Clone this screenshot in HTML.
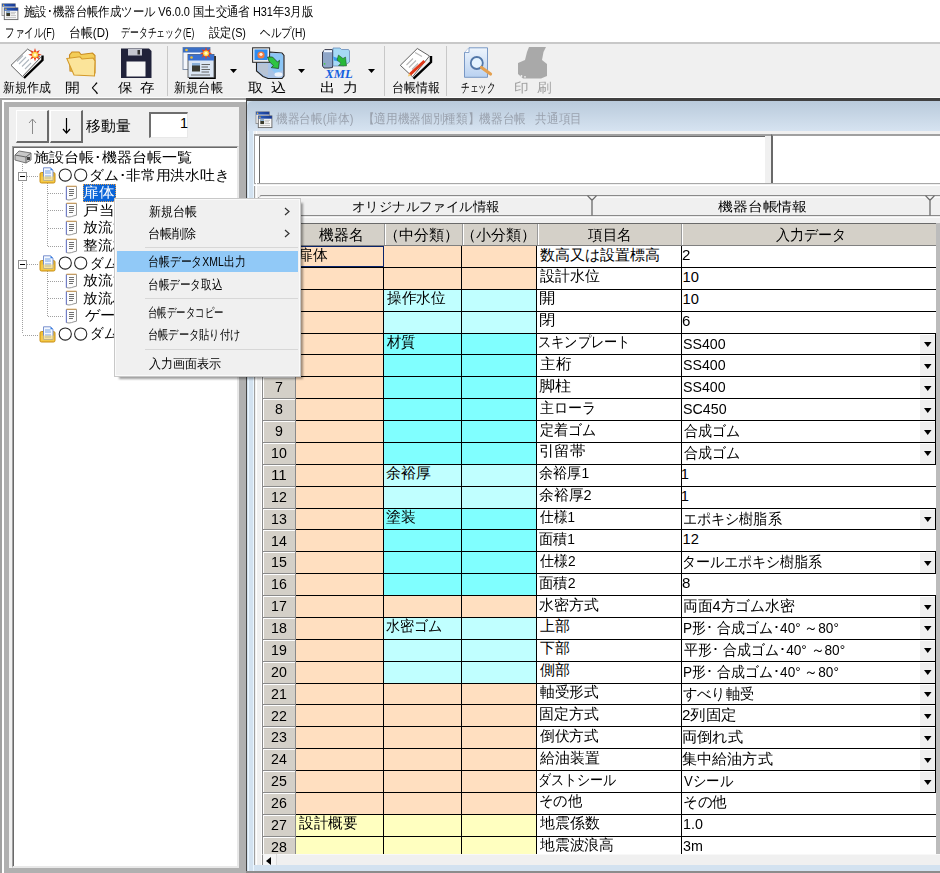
<!DOCTYPE html><html lang="ja"><head><meta charset="utf-8"><style>
*{box-sizing:border-box;margin:0;padding:0}
html,body{width:940px;height:873px;overflow:hidden}
body{position:relative;background:#f0f0f0;font-family:"Liberation Sans",sans-serif;color:#000;font-size:12px;line-height:1}
.a{position:absolute}
.t{position:absolute;white-space:nowrap;line-height:20px;transform-origin:0 0}
</style></head><body><div class="a" style="left:0px;top:0px;width:940px;height:42px;background:#fff"></div>
<svg class="a" style="left:0px;top:1px" width="19" height="20" viewBox="0 0 19 20">
<defs><linearGradient id="tb0" x1="0" x2="1"><stop offset="0" stop-color="#2a5cc0"/><stop offset="1" stop-color="#1a3a90"/></linearGradient></defs>
<rect x="2" y="2.8" width="13.3" height="11.8" fill="#f8f8f8" stroke="#888" stroke-width="0.8"/>
<rect x="2" y="2.8" width="13.3" height="2.8" fill="url(#tb0)"/><circle cx="3.6" cy="4.2" r="0.8" fill="#f8c030"/>
<rect x="5" y="14.6" width="12.9" height="4" fill="#999" opacity="0.5"/>
<rect x="4.3" y="6.9" width="13.6" height="11.7" fill="#fafafa" stroke="#666" stroke-width="0.9"/>
<rect x="4.3" y="6.9" width="13.6" height="2.8" fill="url(#tb0)"/><circle cx="5.9" cy="8.3" r="0.8" fill="#f8c030"/>
<rect x="6.3" y="10.5" width="3.8" height="4.6" fill="#3a3a2a"/><rect x="6.3" y="10.5" width="3.8" height="1.4" fill="#9ac0e8"/>
<path d="M11 11.3H16M11 12.8H15M11 14.6H16M6 16.6H16" stroke="#aaa" stroke-width="0.7"/>
</svg>
<div class="t" style="left:23.90px;top:1.60px;font-size:12.5px;transform:scaleX(0.8751);">施設･機器台帳作成ツール V6.0.0 国土交通省 H31年3月版</div>
<div class="t" style="left:5.33px;top:22.90px;font-size:12.5px;transform:scaleX(0.7338);">ファイル(F)</div>
<div class="t" style="left:68.88px;top:22.90px;font-size:12.5px;transform:scaleX(0.9167);">台帳(D)</div>
<div class="t" style="left:121.22px;top:22.90px;font-size:12.5px;transform:scaleX(0.6802);">データチェック(E)</div>
<div class="t" style="left:209.40px;top:22.90px;font-size:12.5px;transform:scaleX(0.8667);">設定(S)</div>
<div class="t" style="left:260.40px;top:22.90px;font-size:12.5px;transform:scaleX(0.8089);">ヘルプ(H)</div>
<div class="a" style="left:0px;top:42px;width:940px;height:2px;background:#c8c8c8"></div>
<div class="a" style="left:0px;top:97px;width:940px;height:1px;background:#fcfcfc"></div>
<div class="t" style="left:3.00px;top:78.30px;font-size:12.5px;transform:scaleX(0.9135);">新規作成</div>
<div class="t" style="left:65.36px;top:78.30px;font-size:12.5px;transform:scaleX(1.1393);">開&nbsp;&nbsp;く</div>
<div class="t" style="left:118.40px;top:78.30px;font-size:12.5px;transform:scaleX(1.1125);">保&nbsp;&nbsp;存</div>
<div class="t" style="left:174.00px;top:78.30px;font-size:12.5px;transform:scaleX(0.9412);">新規台帳</div>
<div class="t" style="left:248.32px;top:78.30px;font-size:12.5px;transform:scaleX(1.1774);">取&nbsp;&nbsp;込</div>
<div class="t" style="left:319.84px;top:78.30px;font-size:12.5px;transform:scaleX(1.1567);">出&nbsp;&nbsp;力</div>
<div class="t" style="left:392.08px;top:78.30px;font-size:12.5px;transform:scaleX(0.9200);">台帳情報</div>
<div class="t" style="left:461.33px;top:78.30px;font-size:12.5px;transform:scaleX(0.6653);">チェック</div>
<div class="t" style="left:513.87px;top:78.30px;font-size:12.5px;transform:scaleX(1.1290);color:#a0a0a0">印&nbsp;&nbsp;刷</div>
<div class="a" style="left:167px;top:46px;width:1px;height:50px;background:#c8c8c8"></div>
<div class="a" style="left:384px;top:46px;width:1px;height:50px;background:#c8c8c8"></div>
<div class="a" style="left:446px;top:46px;width:1px;height:50px;background:#c8c8c8"></div>
<svg class="a" style="left:230px;top:69px" width="8" height="5"><path d="M0 0H7L3.5 4Z" fill="#000"/></svg>
<svg class="a" style="left:298px;top:69px" width="8" height="5"><path d="M0 0H7L3.5 4Z" fill="#000"/></svg>
<svg class="a" style="left:368px;top:69px" width="8" height="5"><path d="M0 0H7L3.5 4Z" fill="#000"/></svg>
<svg class="a" style="left:8px;top:46px" width="38" height="34" viewBox="8 46 38 34"><path d="M24 78 L42.5 60 L42.5 55.5" stroke="#000" stroke-width="2.4" fill="none"/><path d="M11 65.3 L27.6 49.1 L40.5 57.5 L22.4 76.6 Z" fill="#fff" stroke="#505050" stroke-width="0.9"/><path d="M19 64 L26 57 M22 66.5 L29 59.5 M25 69 L31 63 M17 61.5 L23 55.5" stroke="#b0b8c0" stroke-width="1.1"/><polygon points="35.00,48.00 36.22,51.84 39.81,49.99 37.96,53.58 41.80,54.80 37.96,56.02 39.81,59.61 36.22,57.76 35.00,61.60 33.78,57.76 30.19,59.61 32.04,56.02 28.20,54.80 32.04,53.58 30.19,49.99 33.78,51.84" fill="#e8401a"/><circle cx="35" cy="54.8" r="3.04" fill="#ffd84a"/><circle cx="35" cy="54.8" r="1.60" fill="#fff8d0"/></svg>
<svg class="a" style="left:64px;top:48px" width="34" height="30" viewBox="64 48 34 30"><path d="M70 71 L69.5 55 L72 52 L79 52 L81 54.5 L92.5 53 L95 55.5 L95 73 Z" fill="#f3cd58" stroke="#c98a1e" stroke-width="1.1"/><path d="M66.8 58.5 L80 56.8 L82 59 L93 58 L95 61 L94.5 76 L74 75 Z" fill="#fbe49a" stroke="#d49a2a" stroke-width="1.1"/></svg>
<svg class="a" style="left:119px;top:46px" width="36" height="34" viewBox="119 46 36 34"><path d="M121 48.5 H149 L151.5 51 V78 H121 Z" fill="#20223a"/><rect x="128" y="49" width="14" height="6.5" fill="#c4c6d0"/><rect x="137.5" y="50" width="2.5" height="4.5" fill="#333"/><rect x="126.5" y="61.5" width="19" height="15" fill="#f6f6f6"/></svg>
<svg class="a" style="left:180px;top:44px" width="38" height="36" viewBox="180 44 38 36"><rect x="183" y="47.5" width="27" height="22" fill="#f4f7fb" stroke="#8090a8"/><rect x="183" y="47.5" width="27" height="5" fill="#3b6fc6"/><circle cx="186.5" cy="50" r="1.3" fill="#f0c030"/><path d="M189 78.3 H215 V56" stroke="#000" stroke-width="1.6" fill="none"/><rect x="188" y="54.5" width="26" height="23" fill="#dbe6f4" stroke="#444" stroke-width="0.8"/><rect x="188" y="54.5" width="26" height="6" fill="#3a70d0"/><circle cx="191.5" cy="57.5" r="1.3" fill="#f0c030"/><rect x="192" y="63" width="8" height="8.5" fill="#3a3a30"/><rect x="192" y="63" width="8" height="2.5" fill="#8ab0d8"/><path d="M201.5 64.5H210M201.5 67H208M201.5 69.5H210M201.5 72H209M191 75H210" stroke="#555" stroke-width="0.9"/><polygon points="206.00,47.10 207.15,50.53 210.38,48.92 208.77,52.15 212.20,53.30 208.77,54.45 210.38,57.68 207.15,56.07 206.00,59.50 204.85,56.07 201.62,57.68 203.23,54.45 199.80,53.30 203.23,52.15 201.62,48.92 204.85,50.53" fill="#e8401a"/><circle cx="206" cy="53.3" r="2.85" fill="#ffd84a"/><circle cx="206" cy="53.3" r="1.50" fill="#fff8d0"/></svg>
<svg class="a" style="left:250px;top:45px" width="38" height="36" viewBox="250 45 38 36"><path d="M256.5 62 V71 L263 76.5 L268 78.5 H282 L284 76 V55.5 L282 53 L270 52 Z" fill="#a9c3e6" stroke="#1e1e1e" stroke-width="1.1"/><path d="M270 53.5 H281.5 L283 56 V70 L276 74 L270 68 Z" fill="#8cc6f6"/><path d="M258 64 H268 V76 L263 74.5 L258 70 Z" fill="#b8c4d4"/><ellipse cx="278.5" cy="74.5" rx="4" ry="2.2" fill="#eef3fb"/><rect x="252.6" y="47.8" width="17" height="14.5" fill="#ececec" stroke="#2a2a2a" stroke-width="1"/><rect x="254.5" y="49.5" width="13" height="10.5" fill="#2f8cf0"/><circle cx="261" cy="55" r="3.6" fill="#f07a40"/><circle cx="261" cy="54.3" r="1.6" fill="#fff0e0"/><path d="M267.5 57 L272.5 57 L277.5 62 L279.5 60.3 L278.5 68.5 L271.2 67.6 L273.3 65.6 L269 61.3 Z" fill="#2ec443" stroke="#1a3a1a" stroke-width="0.7"/></svg>
<svg class="a" style="left:320px;top:45px" width="36" height="35" viewBox="320 45 36 35"><path d="M322.5 52 L325 49.6 H332.5 V67.5 L329 68 H324 L322.5 66 Z" fill="#8fa6c8" stroke="#2a2a3a" stroke-width="0.9"/><rect x="324" y="50.2" width="8" height="2" fill="#f4f8ff"/><circle cx="324.6" cy="63.8" r="0.9" fill="#40d040"/><path d="M333 48 H340 L341.5 49.5 H348.5 L349.5 51 V62 L344 66 H333 Z" fill="#a6daf6" stroke="#6a8ab8" stroke-width="0.8"/><path d="M333 56.5 L339 58.5 L338.5 61.5 L334 60.5 Z" fill="#3a9cf0"/><path d="M338.5 55 L343 58.5 L345.5 57 L346.5 66 L338.5 65.5 L341 63.3 L337 60 Z" fill="#28b83a" stroke="#1a4a1a" stroke-width="0.5"/><text x="339" y="77.8" font-family="Liberation Serif" font-style="italic" font-weight="bold" font-size="12" fill="#1460e0" text-anchor="middle" textLength="27.5" lengthAdjust="spacingAndGlyphs">XML</text></svg>
<svg class="a" style="left:398px;top:46px" width="36" height="34" viewBox="398 46 36 34"><path d="M413.5 78.6 L431 62 L431 56" stroke="#000" stroke-width="2.4" fill="none"/><path d="M400.3 65.3 L417.3 48.5 L429.5 56 L412.6 76.8 Z" fill="#fff" stroke="#505050" stroke-width="0.9"/><path d="M406.5 65 L413 58.5 M409 67.5 L416 60.5 M412 69.5 L418 63.5 M415 52.5 L422 56.5" stroke="#b8b8b8" stroke-width="1.1"/><path d="M409.8 74.6 L424.5 61" stroke="#e03818" stroke-width="3"/><path d="M407.8 76.6 L409 73.3 L411.3 75.5 Z" fill="#f0c870"/></svg>
<svg class="a" style="left:462px;top:45px" width="32" height="35" viewBox="462 45 32 35"><defs><linearGradient id="gck" x1="0" y1="0" x2="0" y2="1"><stop offset="0" stop-color="#eef5fd"/><stop offset="1" stop-color="#b9d1f0"/></linearGradient></defs><path d="M464.5 52.5 L469 47.8 H487.5 V77.3 H464.5 Z" fill="url(#gck)" stroke="#6d8fc0" stroke-width="0.9"/><path d="M464.5 52.5 H469 V47.8" fill="#fff" stroke="#6d8fc0" stroke-width="0.8"/><circle cx="476.8" cy="63" r="6" fill="#e4f3ff" stroke="#5277a8" stroke-width="1.8"/><path d="M481.5 67.5 L490.5 74" stroke="#e4a050" stroke-width="3.2" stroke-linecap="round"/></svg>
<svg class="a" style="left:516px;top:45px" width="34" height="36" viewBox="516 45 34 36"><path d="M529 47 H546 L543.5 52 L542 60 L547 64 V76 L541 78.4 H523 L518 74 V63 L525 60 L527 52 Z" fill="#a9a9a9"/><circle cx="521.5" cy="76" r="0.9" fill="#f0f0f0"/><circle cx="525" cy="76.8" r="0.9" fill="#f0f0f0"/></svg>
<div class="a" style="left:0px;top:98px;width:246px;height:775px;background:#a0a0a0"></div>
<div class="a" style="left:2px;top:100px;width:244px;height:773px;background:#fff"></div>
<div class="a" style="left:4px;top:102px;width:242px;height:771px;background:#b0b0b0"></div>
<div class="a" style="left:9px;top:107px;width:230px;height:761px;background:#f0f0f0"></div>
<div class="a" style="left:16px;top:110px;width:33px;height:33px;background:#f0f0f0;border-top:1px solid #fff;border-left:1px solid #fff;border-right:2px solid #6a6a6a;border-bottom:2px solid #6a6a6a"></div>
<div class="a" style="left:50px;top:110px;width:33px;height:33px;background:#f0f0f0;border-top:1px solid #fff;border-left:1px solid #fff;border-right:2px solid #6a6a6a;border-bottom:2px solid #6a6a6a"></div>
<svg class="a" style="left:28px;top:118px" width="9" height="17"><path d="M4.5 1V16M1 5L4.5 1L8 5" stroke="#8a8a8a" stroke-width="1" fill="none"/></svg>
<svg class="a" style="left:62px;top:118px" width="9" height="17"><path d="M4.5 0V15M1 11L4.5 15L8 11" stroke="#000" stroke-width="1.2" fill="none"/></svg>
<div class="t" style="left:86.00px;top:115.50px;font-size:14.6px;transform:scaleX(0.9864);">移動量</div>
<div class="a" style="left:149px;top:112px;width:39px;height:26px;background:#fff;border-top:2px solid #6e6e6e;border-left:2px solid #6e6e6e;border-bottom:1px solid #e8e8e8;border-right:1px solid #e8e8e8"></div>
<div class="t" style="left:180.05px;top:112.80px;font-size:14.4px;">1</div>
<div class="a" style="left:12px;top:146px;width:227px;height:722px;background:#fff;border-top:1px solid #a0a0a0;border-left:1px solid #a0a0a0;border-right:2px solid #e8e8e8;border-bottom:2px solid #e8e8e8;box-shadow:inset 1px 1px 0 #696969"></div>
<svg class="a" style="left:14px;top:150px" width="18" height="14" viewBox="0 0 18 14">
<path d="M1 5 L5 1 L17 3 L17 10 L12 13 L1 10 Z" fill="#c8c8c8" stroke="#777"/>
<path d="M1 5 L12 7 L17 3 M12 7 L12 13" stroke="#666" fill="none"/>
<rect x="13" y="7" width="3" height="3" fill="#444"/>
</svg>
<div class="t" style="left:34.42px;top:146.90px;font-size:14.4px;transform:scaleX(1.0779);">施設台帳･機器台帳一覧</div>
<div class="a" style="left:22px;top:164px;width:1px;height:170px;background:repeating-linear-gradient(#a0a0a0 0 1px,transparent 1px 2px)"></div>
<div class="a" style="left:47px;top:183px;width:1px;height:64px;background:repeating-linear-gradient(#a0a0a0 0 1px,transparent 1px 2px)"></div>
<div class="a" style="left:47px;top:271px;width:1px;height:46px;background:repeating-linear-gradient(#a0a0a0 0 1px,transparent 1px 2px)"></div>
<div class="a" style="left:18px;top:172px;width:9px;height:9px;background:#fff;border:1px solid #919191"></div>
<div class="a" style="left:20px;top:176px;width:5px;height:1px;background:#000"></div>
<div class="a" style="left:27px;top:176px;width:11px;height:1px;background:repeating-linear-gradient(90deg,#a0a0a0 0 1px,transparent 1px 2px)"></div>
<svg class="a" style="left:39px;top:167px" width="17" height="17" viewBox="0 0 17 17">
<path d="M1 7 Q1 5.5 2.5 5.5 H14.5 Q16 5.5 16 7 V14.5 Q16 16 14.5 16 H2.5 Q1 16 1 14.5 Z" fill="#f2c23a" stroke="#c8901a" stroke-width="1"/>
<path d="M4.5 0.8 H11.5 L14 3.2 V13.5 H4.5 Z" fill="#f4f8ff" stroke="#6c86c8" stroke-width="0.9"/>
<path d="M11.5 0.8 L14 3.2 H11.5 Z" fill="#2a7ae8"/>
<path d="M6 4H11.5M6 6H12M6 9H12M6 11H12" stroke="#6a9ae0" stroke-width="0.9"/>
<path d="M2 9.5 H15 V14.8 H2 Z" fill="#f7d25a" opacity="0.55"/>
</svg>
<svg class="a" style="left:58px;top:167.02px" width="32" height="16"><circle cx="7.25" cy="8" r="6.1" fill="none" stroke="#222" stroke-width="1.05"/><circle cx="22.7" cy="8" r="6.1" fill="none" stroke="#222" stroke-width="1.05"/></svg>
<div class="t" style="left:89.48px;top:164.52px;font-size:14.4px;transform:scaleX(1.0578);">ダム･非常用洪水吐き</div>
<div class="a" style="left:18px;top:260px;width:9px;height:9px;background:#fff;border:1px solid #919191"></div>
<div class="a" style="left:20px;top:264px;width:5px;height:1px;background:#000"></div>
<div class="a" style="left:27px;top:264px;width:11px;height:1px;background:repeating-linear-gradient(90deg,#a0a0a0 0 1px,transparent 1px 2px)"></div>
<svg class="a" style="left:39px;top:255px" width="17" height="17" viewBox="0 0 17 17">
<path d="M1 7 Q1 5.5 2.5 5.5 H14.5 Q16 5.5 16 7 V14.5 Q16 16 14.5 16 H2.5 Q1 16 1 14.5 Z" fill="#f2c23a" stroke="#c8901a" stroke-width="1"/>
<path d="M4.5 0.8 H11.5 L14 3.2 V13.5 H4.5 Z" fill="#f4f8ff" stroke="#6c86c8" stroke-width="0.9"/>
<path d="M11.5 0.8 L14 3.2 H11.5 Z" fill="#2a7ae8"/>
<path d="M6 4H11.5M6 6H12M6 9H12M6 11H12" stroke="#6a9ae0" stroke-width="0.9"/>
<path d="M2 9.5 H15 V14.8 H2 Z" fill="#f7d25a" opacity="0.55"/>
</svg>
<svg class="a" style="left:58px;top:255.12px" width="32" height="16"><circle cx="7.25" cy="8" r="6.1" fill="none" stroke="#222" stroke-width="1.05"/><circle cx="22.7" cy="8" r="6.1" fill="none" stroke="#222" stroke-width="1.05"/></svg>
<div class="t" style="left:89.66px;top:252.62px;font-size:14.4px;transform:scaleX(0.9720);">ダム</div>
<div class="a" style="left:23px;top:335px;width:15px;height:1px;background:repeating-linear-gradient(90deg,#a0a0a0 0 1px,transparent 1px 2px)"></div>
<svg class="a" style="left:39px;top:326px" width="17" height="17" viewBox="0 0 17 17">
<path d="M1 7 Q1 5.5 2.5 5.5 H14.5 Q16 5.5 16 7 V14.5 Q16 16 14.5 16 H2.5 Q1 16 1 14.5 Z" fill="#f2c23a" stroke="#c8901a" stroke-width="1"/>
<path d="M4.5 0.8 H11.5 L14 3.2 V13.5 H4.5 Z" fill="#f4f8ff" stroke="#6c86c8" stroke-width="0.9"/>
<path d="M11.5 0.8 L14 3.2 H11.5 Z" fill="#2a7ae8"/>
<path d="M6 4H11.5M6 6H12M6 9H12M6 11H12" stroke="#6a9ae0" stroke-width="0.9"/>
<path d="M2 9.5 H15 V14.8 H2 Z" fill="#f7d25a" opacity="0.55"/>
</svg>
<svg class="a" style="left:58px;top:325.60px" width="32" height="16"><circle cx="7.25" cy="8" r="6.1" fill="none" stroke="#222" stroke-width="1.05"/><circle cx="22.7" cy="8" r="6.1" fill="none" stroke="#222" stroke-width="1.05"/></svg>
<div class="t" style="left:89.66px;top:323.10px;font-size:14.4px;transform:scaleX(0.9720);">ダム</div>
<div class="a" style="left:48px;top:193px;width:16px;height:1px;background:repeating-linear-gradient(90deg,#a0a0a0 0 1px,transparent 1px 2px)"></div>
<svg class="a" style="left:65px;top:185px" width="13" height="16" viewBox="0 0 13 16">
<path d="M1.5 1.5 H11.5 V13.2 Q9 13.6 6.5 14.6 Q4 15.4 1.5 14.6 Z" fill="#fdfdfd" stroke="#8a8a8a" stroke-width="0.9"/>
<path d="M1.3 1.5 V14.6" stroke="#6a78d0" stroke-width="1"/>
<path d="M1.5 1.2 H11.5" stroke="#d8a050" stroke-width="1"/>
<path d="M4 4.5H9M4 6.5H9M4 8.5H9M4 10.5H8" stroke="#707070" stroke-width="1" shape-rendering="crispEdges"/>
</svg>
<div class="a" style="left:83px;top:184px;width:33px;height:18px;background:#0a64d8;border:1px dotted #e0a050"></div>
<div class="t" style="left:83.39px;top:182.14px;font-size:14.4px;transform:scaleX(1.1115);color:#fff">扉体</div>
<div class="a" style="left:48px;top:210px;width:16px;height:1px;background:repeating-linear-gradient(90deg,#a0a0a0 0 1px,transparent 1px 2px)"></div>
<svg class="a" style="left:65px;top:202px" width="13" height="16" viewBox="0 0 13 16">
<path d="M1.5 1.5 H11.5 V13.2 Q9 13.6 6.5 14.6 Q4 15.4 1.5 14.6 Z" fill="#fdfdfd" stroke="#8a8a8a" stroke-width="0.9"/>
<path d="M1.3 1.5 V14.6" stroke="#6a78d0" stroke-width="1"/>
<path d="M1.5 1.2 H11.5" stroke="#d8a050" stroke-width="1"/>
<path d="M4 4.5H9M4 6.5H9M4 8.5H9M4 10.5H8" stroke="#707070" stroke-width="1" shape-rendering="crispEdges"/>
</svg>
<div class="t" style="left:83.39px;top:199.76px;font-size:14.4px;transform:scaleX(1.1132);">戸当り</div>
<div class="a" style="left:48px;top:228px;width:16px;height:1px;background:repeating-linear-gradient(90deg,#a0a0a0 0 1px,transparent 1px 2px)"></div>
<svg class="a" style="left:65px;top:220px" width="13" height="16" viewBox="0 0 13 16">
<path d="M1.5 1.5 H11.5 V13.2 Q9 13.6 6.5 14.6 Q4 15.4 1.5 14.6 Z" fill="#fdfdfd" stroke="#8a8a8a" stroke-width="0.9"/>
<path d="M1.3 1.5 V14.6" stroke="#6a78d0" stroke-width="1"/>
<path d="M1.5 1.2 H11.5" stroke="#d8a050" stroke-width="1"/>
<path d="M4 4.5H9M4 6.5H9M4 8.5H9M4 10.5H8" stroke="#707070" stroke-width="1" shape-rendering="crispEdges"/>
</svg>
<div class="t" style="left:83.44px;top:217.38px;font-size:14.4px;transform:scaleX(1.0575);">放流管</div>
<div class="a" style="left:48px;top:246px;width:16px;height:1px;background:repeating-linear-gradient(90deg,#a0a0a0 0 1px,transparent 1px 2px)"></div>
<svg class="a" style="left:65px;top:238px" width="13" height="16" viewBox="0 0 13 16">
<path d="M1.5 1.5 H11.5 V13.2 Q9 13.6 6.5 14.6 Q4 15.4 1.5 14.6 Z" fill="#fdfdfd" stroke="#8a8a8a" stroke-width="0.9"/>
<path d="M1.3 1.5 V14.6" stroke="#6a78d0" stroke-width="1"/>
<path d="M1.5 1.2 H11.5" stroke="#d8a050" stroke-width="1"/>
<path d="M4 4.5H9M4 6.5H9M4 8.5H9M4 10.5H8" stroke="#707070" stroke-width="1" shape-rendering="crispEdges"/>
</svg>
<div class="t" style="left:83.44px;top:235.00px;font-size:14.4px;transform:scaleX(1.0575);">整流板</div>
<div class="a" style="left:48px;top:281px;width:16px;height:1px;background:repeating-linear-gradient(90deg,#a0a0a0 0 1px,transparent 1px 2px)"></div>
<svg class="a" style="left:65px;top:273px" width="13" height="16" viewBox="0 0 13 16">
<path d="M1.5 1.5 H11.5 V13.2 Q9 13.6 6.5 14.6 Q4 15.4 1.5 14.6 Z" fill="#fdfdfd" stroke="#8a8a8a" stroke-width="0.9"/>
<path d="M1.3 1.5 V14.6" stroke="#6a78d0" stroke-width="1"/>
<path d="M1.5 1.2 H11.5" stroke="#d8a050" stroke-width="1"/>
<path d="M4 4.5H9M4 6.5H9M4 8.5H9M4 10.5H8" stroke="#707070" stroke-width="1" shape-rendering="crispEdges"/>
</svg>
<div class="t" style="left:83.44px;top:270.24px;font-size:14.4px;transform:scaleX(1.0575);">放流管</div>
<div class="a" style="left:48px;top:298px;width:16px;height:1px;background:repeating-linear-gradient(90deg,#a0a0a0 0 1px,transparent 1px 2px)"></div>
<svg class="a" style="left:65px;top:290px" width="13" height="16" viewBox="0 0 13 16">
<path d="M1.5 1.5 H11.5 V13.2 Q9 13.6 6.5 14.6 Q4 15.4 1.5 14.6 Z" fill="#fdfdfd" stroke="#8a8a8a" stroke-width="0.9"/>
<path d="M1.3 1.5 V14.6" stroke="#6a78d0" stroke-width="1"/>
<path d="M1.5 1.2 H11.5" stroke="#d8a050" stroke-width="1"/>
<path d="M4 4.5H9M4 6.5H9M4 8.5H9M4 10.5H8" stroke="#707070" stroke-width="1" shape-rendering="crispEdges"/>
</svg>
<div class="t" style="left:83.46px;top:287.86px;font-size:14.4px;transform:scaleX(1.0362);">放流バルブ</div>
<div class="a" style="left:48px;top:316px;width:16px;height:1px;background:repeating-linear-gradient(90deg,#a0a0a0 0 1px,transparent 1px 2px)"></div>
<svg class="a" style="left:65px;top:308px" width="13" height="16" viewBox="0 0 13 16">
<path d="M1.5 1.5 H11.5 V13.2 Q9 13.6 6.5 14.6 Q4 15.4 1.5 14.6 Z" fill="#fdfdfd" stroke="#8a8a8a" stroke-width="0.9"/>
<path d="M1.3 1.5 V14.6" stroke="#6a78d0" stroke-width="1"/>
<path d="M1.5 1.2 H11.5" stroke="#d8a050" stroke-width="1"/>
<path d="M4 4.5H9M4 6.5H9M4 8.5H9M4 10.5H8" stroke="#707070" stroke-width="1" shape-rendering="crispEdges"/>
</svg>
<div class="t" style="left:84.50px;top:305.48px;font-size:14.4px;transform:scaleX(1.0846);">ゲート</div>
<div class="a" style="left:246px;top:98px;width:694px;height:775px;background:#444"></div>
<div class="a" style="left:246px;top:98px;width:694px;height:3px;background:#404040"></div>
<div class="a" style="left:247px;top:101px;width:693px;height:772px;background:#d3e2f0"></div>
<div class="a" style="left:248px;top:131px;width:1px;height:740px;background:#eaf6ff"></div>
<div class="a" style="left:253px;top:131px;width:1px;height:740px;background:#eaf6ff"></div>
<div class="a" style="left:247px;top:101px;width:693px;height:30px;background:linear-gradient(#b9cadb,#d6e3f1);border-top-left-radius:6px"></div>
<svg class="a" style="left:254px;top:109px" width="19" height="20" viewBox="0 0 19 20">
<defs><linearGradient id="tb254" x1="0" x2="1"><stop offset="0" stop-color="#2a5cc0"/><stop offset="1" stop-color="#1a3a90"/></linearGradient></defs>
<rect x="2" y="2.8" width="13.3" height="11.8" fill="#f8f8f8" stroke="#888" stroke-width="0.8"/>
<rect x="2" y="2.8" width="13.3" height="2.8" fill="url(#tb254)"/><circle cx="3.6" cy="4.2" r="0.8" fill="#f8c030"/>
<rect x="5" y="14.6" width="12.9" height="4" fill="#999" opacity="0.5"/>
<rect x="4.3" y="6.9" width="13.6" height="11.7" fill="#fafafa" stroke="#666" stroke-width="0.9"/>
<rect x="4.3" y="6.9" width="13.6" height="2.8" fill="url(#tb254)"/><circle cx="5.9" cy="8.3" r="0.8" fill="#f8c030"/>
<rect x="6.3" y="10.5" width="3.8" height="4.6" fill="#3a3a2a"/><rect x="6.3" y="10.5" width="3.8" height="1.4" fill="#9ac0e8"/>
<path d="M11 11.3H16M11 12.8H15M11 14.6H16M6 16.6H16" stroke="#aaa" stroke-width="0.7"/>
</svg>
<div class="t" style="left:276.00px;top:109.10px;font-size:12.5px;transform:scaleX(0.8968);color:#9aa2ae">機器台帳(扉体)&nbsp;&nbsp;&nbsp;【適用機器個別種類】機器台帳&nbsp;&nbsp;&nbsp;共通項目</div>
<div class="a" style="left:254px;top:131px;width:686px;height:734px;background:#f0f0f0"></div>
<div class="a" style="left:254px;top:134px;width:1px;height:731px;background:#a0a0a0"></div>
<div class="a" style="left:254px;top:131px;width:686px;height:55px;background:#f0f0f0;border-bottom:1px solid #fff"></div>
<div class="a" style="left:254px;top:183px;width:686px;height:1px;background:#a8a8a8"></div>
<div class="a" style="left:256px;top:131px;width:1px;height:734px;background:#fff"></div>
<div class="a" style="left:261px;top:223px;width:1px;height:642px;background:#fff"></div>
<div class="a" style="left:254px;top:134px;width:511px;height:49px;background:#fff;border-top:2px solid #a0a0a0;border-left:1px solid #a0a0a0"></div>
<div class="a" style="left:259px;top:136px;width:506px;height:47px;background:#fff;border-top:1px solid #696969;border-left:1px solid #696969"></div>
<div class="a" style="left:765px;top:134px;width:175px;height:49px;background:#f0f0f0;border-top:2px solid #a0a0a0"></div>
<div class="a" style="left:771px;top:134px;width:169px;height:49px;background:#fff;border-top:2px solid #a0a0a0;border-left:2px solid #696969"></div>
<svg class="a" style="left:254px;top:190px" width="686" height="34" viewBox="254 190 686 34">
<path d="M257.8 215.5 V199 L261 195.6 H940" fill="none" stroke="#8a8a8a" stroke-width="1.4"/>
<path d="M259 197.2 H940" stroke="#fff" stroke-width="1.2"/>
<path d="M257 215.6 H940" stroke="#8a8a8a" stroke-width="1.4"/>
<path d="M257 217.2 H940" stroke="#fff" stroke-width="1.2"/>
<path d="M587.5 195.6 L592 200.2 L596.5 195.6 M592 200.2 V215.6" fill="none" stroke="#6a6a6a" stroke-width="1.3"/>
<path d="M925.5 195.6 L930 200.2 L934.5 195.6 M930 200.2 V215.6" fill="none" stroke="#6a6a6a" stroke-width="1.3"/>
</svg>
<div class="t" style="left:351.97px;top:197.10px;font-size:13.3px;transform:scaleX(1.0319);">オリジナルファイル情報</div>
<div class="t" style="left:717.90px;top:197.10px;font-size:13.3px;transform:scaleX(1.1442);">機器台帳情報</div>
<div class="a" style="left:262px;top:223px;width:674px;height:1px;background:#6a6a6a"></div>
<div class="a" style="left:936px;top:223px;width:4px;height:631px;background:#bcbcbc"></div>
<div class="a" style="left:263px;top:224px;width:673px;height:21px;background:#d4d0c8"></div>
<div class="a" style="left:263px;top:245px;width:673px;height:1px;background:#808080"></div>
<div class="a" style="left:295px;top:224px;width:1px;height:21px;background:#9a9a9a"></div>
<div class="a" style="left:296px;top:224px;width:1px;height:21px;background:#fff"></div>
<div class="a" style="left:384px;top:224px;width:1px;height:21px;background:#9a9a9a"></div>
<div class="a" style="left:385px;top:224px;width:1px;height:21px;background:#fff"></div>
<div class="a" style="left:462px;top:224px;width:1px;height:21px;background:#9a9a9a"></div>
<div class="a" style="left:463px;top:224px;width:1px;height:21px;background:#fff"></div>
<div class="a" style="left:537px;top:224px;width:1px;height:21px;background:#9a9a9a"></div>
<div class="a" style="left:538px;top:224px;width:1px;height:21px;background:#fff"></div>
<div class="a" style="left:681px;top:224px;width:1px;height:21px;background:#9a9a9a"></div>
<div class="a" style="left:682px;top:224px;width:1px;height:21px;background:#fff"></div>
<div class="t" style="left:318.70px;top:224.50px;font-size:14.7px;transform:scaleX(0.9907);">機器名</div>
<div class="t" style="left:383.83px;top:224.50px;font-size:14.7px;transform:scaleX(1.0073);">（中分類）</div>
<div class="t" style="left:460.53px;top:224.50px;font-size:14.7px;transform:scaleX(1.0073);">（小分類）</div>
<div class="t" style="left:588.30px;top:224.50px;font-size:14.7px;transform:scaleX(0.9698);">項目名</div>
<div class="t" style="left:776.00px;top:224.50px;font-size:14.7px;transform:scaleX(0.9375);">入力データ</div>
<div class="a" style="left:262px;top:246px;width:674px;height:608px;overflow:hidden">
<div class="a" style="left:0;top:0.000px;width:34px;height:21.875px;background:#d4d0c8;border-left:1px solid #8a8a8a;border-right:1px solid #8a8a8a;border-bottom:1px solid #8a8a8a;box-shadow:inset 1px 1px 0 #fff"></div>
<div class="a" style="left:34px;top:0.000px;width:88px;height:21.875px;background:#ffdfc0;border-right:1px solid #000;border-bottom:1px solid #000"></div>
<div class="a" style="left:122px;top:0.000px;width:78px;height:21.875px;background:#ffdfc0;border-right:1px solid #000;border-bottom:1px solid #000"></div>
<div class="a" style="left:200px;top:0.000px;width:75px;height:21.875px;background:#ffdfc0;border-right:1px solid #000;border-bottom:1px solid #000"></div>
<div class="a" style="left:275px;top:0.000px;width:145px;height:21.875px;background:#fff;border-right:1px solid #000;border-bottom:1px solid #000"></div>
<div class="a" style="left:420px;top:0.000px;width:254px;height:21.875px;background:#fff;border-bottom:1px solid #000;"></div>
<div class="a" style="left:0;top:21.875px;width:34px;height:21.875px;background:#d4d0c8;border-left:1px solid #8a8a8a;border-right:1px solid #8a8a8a;border-bottom:1px solid #8a8a8a;box-shadow:inset 1px 1px 0 #fff"></div>
<div class="a" style="left:34px;top:21.875px;width:88px;height:21.875px;background:#ffdfc0;border-right:1px solid #000;border-bottom:1px solid #000"></div>
<div class="a" style="left:122px;top:21.875px;width:78px;height:21.875px;background:#ffdfc0;border-right:1px solid #000;border-bottom:1px solid #000"></div>
<div class="a" style="left:200px;top:21.875px;width:75px;height:21.875px;background:#ffdfc0;border-right:1px solid #000;border-bottom:1px solid #000"></div>
<div class="a" style="left:275px;top:21.875px;width:145px;height:21.875px;background:#fff;border-right:1px solid #000;border-bottom:1px solid #000"></div>
<div class="a" style="left:420px;top:21.875px;width:254px;height:21.875px;background:#fff;border-bottom:1px solid #000;"></div>
<div class="a" style="left:0;top:43.750px;width:34px;height:21.875px;background:#d4d0c8;border-left:1px solid #8a8a8a;border-right:1px solid #8a8a8a;border-bottom:1px solid #8a8a8a;box-shadow:inset 1px 1px 0 #fff"></div>
<div class="a" style="left:34px;top:43.750px;width:88px;height:21.875px;background:#ffdfc0;border-right:1px solid #000;border-bottom:1px solid #000"></div>
<div class="a" style="left:122px;top:43.750px;width:78px;height:21.875px;background:#c0ffff;border-right:1px solid #000;border-bottom:1px solid #000"></div>
<div class="a" style="left:200px;top:43.750px;width:75px;height:21.875px;background:#c0ffff;border-right:1px solid #000;border-bottom:1px solid #000"></div>
<div class="a" style="left:275px;top:43.750px;width:145px;height:21.875px;background:#fff;border-right:1px solid #000;border-bottom:1px solid #000"></div>
<div class="a" style="left:420px;top:43.750px;width:254px;height:21.875px;background:#fff;border-bottom:1px solid #000;"></div>
<div class="a" style="left:0;top:65.625px;width:34px;height:21.875px;background:#d4d0c8;border-left:1px solid #8a8a8a;border-right:1px solid #8a8a8a;border-bottom:1px solid #8a8a8a;box-shadow:inset 1px 1px 0 #fff"></div>
<div class="a" style="left:34px;top:65.625px;width:88px;height:21.875px;background:#ffdfc0;border-right:1px solid #000;border-bottom:1px solid #000"></div>
<div class="a" style="left:122px;top:65.625px;width:78px;height:21.875px;background:#c0ffff;border-right:1px solid #000;border-bottom:1px solid #000"></div>
<div class="a" style="left:200px;top:65.625px;width:75px;height:21.875px;background:#c0ffff;border-right:1px solid #000;border-bottom:1px solid #000"></div>
<div class="a" style="left:275px;top:65.625px;width:145px;height:21.875px;background:#fff;border-right:1px solid #000;border-bottom:1px solid #000"></div>
<div class="a" style="left:420px;top:65.625px;width:254px;height:21.875px;background:#fff;border-bottom:1px solid #000;"></div>
<div class="a" style="left:0;top:87.500px;width:34px;height:21.875px;background:#d4d0c8;border-left:1px solid #8a8a8a;border-right:1px solid #8a8a8a;border-bottom:1px solid #8a8a8a;box-shadow:inset 1px 1px 0 #fff"></div>
<div class="a" style="left:34px;top:87.500px;width:88px;height:21.875px;background:#ffdfc0;border-right:1px solid #000;border-bottom:1px solid #000"></div>
<div class="a" style="left:122px;top:87.500px;width:78px;height:21.875px;background:#80ffff;border-right:1px solid #000;border-bottom:1px solid #000"></div>
<div class="a" style="left:200px;top:87.500px;width:75px;height:21.875px;background:#80ffff;border-right:1px solid #000;border-bottom:1px solid #000"></div>
<div class="a" style="left:275px;top:87.500px;width:145px;height:21.875px;background:#fff;border-right:1px solid #000;border-bottom:1px solid #000"></div>
<div class="a" style="left:420px;top:87.500px;width:254px;height:21.875px;background:#fff;border-bottom:1px solid #000;border-right:1px solid #000"></div>
<div class="a" style="left:658px;top:88.500px;width:15px;height:19.875px;background:#f0f0f0"></div>
<svg class="a" style="left:662px;top:96.000px" width="8" height="5"><path d="M0 0H7.5L3.75 5Z" fill="#000"/></svg>
<div class="a" style="left:0;top:109.375px;width:34px;height:21.875px;background:#d4d0c8;border-left:1px solid #8a8a8a;border-right:1px solid #8a8a8a;border-bottom:1px solid #8a8a8a;box-shadow:inset 1px 1px 0 #fff"></div>
<div class="a" style="left:34px;top:109.375px;width:88px;height:21.875px;background:#ffdfc0;border-right:1px solid #000;border-bottom:1px solid #000"></div>
<div class="a" style="left:122px;top:109.375px;width:78px;height:21.875px;background:#80ffff;border-right:1px solid #000;border-bottom:1px solid #000"></div>
<div class="a" style="left:200px;top:109.375px;width:75px;height:21.875px;background:#80ffff;border-right:1px solid #000;border-bottom:1px solid #000"></div>
<div class="a" style="left:275px;top:109.375px;width:145px;height:21.875px;background:#fff;border-right:1px solid #000;border-bottom:1px solid #000"></div>
<div class="a" style="left:420px;top:109.375px;width:254px;height:21.875px;background:#fff;border-bottom:1px solid #000;border-right:1px solid #000"></div>
<div class="a" style="left:658px;top:110.375px;width:15px;height:19.875px;background:#f0f0f0"></div>
<svg class="a" style="left:662px;top:117.875px" width="8" height="5"><path d="M0 0H7.5L3.75 5Z" fill="#000"/></svg>
<div class="a" style="left:0;top:131.250px;width:34px;height:21.875px;background:#d4d0c8;border-left:1px solid #8a8a8a;border-right:1px solid #8a8a8a;border-bottom:1px solid #8a8a8a;box-shadow:inset 1px 1px 0 #fff"></div>
<div class="a" style="left:34px;top:131.250px;width:88px;height:21.875px;background:#ffdfc0;border-right:1px solid #000;border-bottom:1px solid #000"></div>
<div class="a" style="left:122px;top:131.250px;width:78px;height:21.875px;background:#80ffff;border-right:1px solid #000;border-bottom:1px solid #000"></div>
<div class="a" style="left:200px;top:131.250px;width:75px;height:21.875px;background:#80ffff;border-right:1px solid #000;border-bottom:1px solid #000"></div>
<div class="a" style="left:275px;top:131.250px;width:145px;height:21.875px;background:#fff;border-right:1px solid #000;border-bottom:1px solid #000"></div>
<div class="a" style="left:420px;top:131.250px;width:254px;height:21.875px;background:#fff;border-bottom:1px solid #000;border-right:1px solid #000"></div>
<div class="a" style="left:658px;top:132.250px;width:15px;height:19.875px;background:#f0f0f0"></div>
<svg class="a" style="left:662px;top:139.750px" width="8" height="5"><path d="M0 0H7.5L3.75 5Z" fill="#000"/></svg>
<div class="a" style="left:0;top:153.125px;width:34px;height:21.875px;background:#d4d0c8;border-left:1px solid #8a8a8a;border-right:1px solid #8a8a8a;border-bottom:1px solid #8a8a8a;box-shadow:inset 1px 1px 0 #fff"></div>
<div class="a" style="left:34px;top:153.125px;width:88px;height:21.875px;background:#ffdfc0;border-right:1px solid #000;border-bottom:1px solid #000"></div>
<div class="a" style="left:122px;top:153.125px;width:78px;height:21.875px;background:#80ffff;border-right:1px solid #000;border-bottom:1px solid #000"></div>
<div class="a" style="left:200px;top:153.125px;width:75px;height:21.875px;background:#80ffff;border-right:1px solid #000;border-bottom:1px solid #000"></div>
<div class="a" style="left:275px;top:153.125px;width:145px;height:21.875px;background:#fff;border-right:1px solid #000;border-bottom:1px solid #000"></div>
<div class="a" style="left:420px;top:153.125px;width:254px;height:21.875px;background:#fff;border-bottom:1px solid #000;border-right:1px solid #000"></div>
<div class="a" style="left:658px;top:154.125px;width:15px;height:19.875px;background:#f0f0f0"></div>
<svg class="a" style="left:662px;top:161.625px" width="8" height="5"><path d="M0 0H7.5L3.75 5Z" fill="#000"/></svg>
<div class="a" style="left:0;top:175.000px;width:34px;height:21.875px;background:#d4d0c8;border-left:1px solid #8a8a8a;border-right:1px solid #8a8a8a;border-bottom:1px solid #8a8a8a;box-shadow:inset 1px 1px 0 #fff"></div>
<div class="a" style="left:34px;top:175.000px;width:88px;height:21.875px;background:#ffdfc0;border-right:1px solid #000;border-bottom:1px solid #000"></div>
<div class="a" style="left:122px;top:175.000px;width:78px;height:21.875px;background:#80ffff;border-right:1px solid #000;border-bottom:1px solid #000"></div>
<div class="a" style="left:200px;top:175.000px;width:75px;height:21.875px;background:#80ffff;border-right:1px solid #000;border-bottom:1px solid #000"></div>
<div class="a" style="left:275px;top:175.000px;width:145px;height:21.875px;background:#fff;border-right:1px solid #000;border-bottom:1px solid #000"></div>
<div class="a" style="left:420px;top:175.000px;width:254px;height:21.875px;background:#fff;border-bottom:1px solid #000;border-right:1px solid #000"></div>
<div class="a" style="left:658px;top:176.000px;width:15px;height:19.875px;background:#f0f0f0"></div>
<svg class="a" style="left:662px;top:183.500px" width="8" height="5"><path d="M0 0H7.5L3.75 5Z" fill="#000"/></svg>
<div class="a" style="left:0;top:196.875px;width:34px;height:21.875px;background:#d4d0c8;border-left:1px solid #8a8a8a;border-right:1px solid #8a8a8a;border-bottom:1px solid #8a8a8a;box-shadow:inset 1px 1px 0 #fff"></div>
<div class="a" style="left:34px;top:196.875px;width:88px;height:21.875px;background:#ffdfc0;border-right:1px solid #000;border-bottom:1px solid #000"></div>
<div class="a" style="left:122px;top:196.875px;width:78px;height:21.875px;background:#80ffff;border-right:1px solid #000;border-bottom:1px solid #000"></div>
<div class="a" style="left:200px;top:196.875px;width:75px;height:21.875px;background:#80ffff;border-right:1px solid #000;border-bottom:1px solid #000"></div>
<div class="a" style="left:275px;top:196.875px;width:145px;height:21.875px;background:#fff;border-right:1px solid #000;border-bottom:1px solid #000"></div>
<div class="a" style="left:420px;top:196.875px;width:254px;height:21.875px;background:#fff;border-bottom:1px solid #000;border-right:1px solid #000"></div>
<div class="a" style="left:658px;top:197.875px;width:15px;height:19.875px;background:#f0f0f0"></div>
<svg class="a" style="left:662px;top:205.375px" width="8" height="5"><path d="M0 0H7.5L3.75 5Z" fill="#000"/></svg>
<div class="a" style="left:0;top:218.750px;width:34px;height:21.875px;background:#d4d0c8;border-left:1px solid #8a8a8a;border-right:1px solid #8a8a8a;border-bottom:1px solid #8a8a8a;box-shadow:inset 1px 1px 0 #fff"></div>
<div class="a" style="left:34px;top:218.750px;width:88px;height:21.875px;background:#ffdfc0;border-right:1px solid #000;border-bottom:1px solid #000"></div>
<div class="a" style="left:122px;top:218.750px;width:78px;height:21.875px;background:#c0ffff;border-right:1px solid #000;border-bottom:1px solid #000"></div>
<div class="a" style="left:200px;top:218.750px;width:75px;height:21.875px;background:#c0ffff;border-right:1px solid #000;border-bottom:1px solid #000"></div>
<div class="a" style="left:275px;top:218.750px;width:145px;height:21.875px;background:#fff;border-right:1px solid #000;border-bottom:1px solid #000"></div>
<div class="a" style="left:420px;top:218.750px;width:254px;height:21.875px;background:#fff;border-bottom:1px solid #000;"></div>
<div class="a" style="left:0;top:240.625px;width:34px;height:21.875px;background:#d4d0c8;border-left:1px solid #8a8a8a;border-right:1px solid #8a8a8a;border-bottom:1px solid #8a8a8a;box-shadow:inset 1px 1px 0 #fff"></div>
<div class="a" style="left:34px;top:240.625px;width:88px;height:21.875px;background:#ffdfc0;border-right:1px solid #000;border-bottom:1px solid #000"></div>
<div class="a" style="left:122px;top:240.625px;width:78px;height:21.875px;background:#c0ffff;border-right:1px solid #000;border-bottom:1px solid #000"></div>
<div class="a" style="left:200px;top:240.625px;width:75px;height:21.875px;background:#c0ffff;border-right:1px solid #000;border-bottom:1px solid #000"></div>
<div class="a" style="left:275px;top:240.625px;width:145px;height:21.875px;background:#fff;border-right:1px solid #000;border-bottom:1px solid #000"></div>
<div class="a" style="left:420px;top:240.625px;width:254px;height:21.875px;background:#fff;border-bottom:1px solid #000;"></div>
<div class="a" style="left:0;top:262.500px;width:34px;height:21.875px;background:#d4d0c8;border-left:1px solid #8a8a8a;border-right:1px solid #8a8a8a;border-bottom:1px solid #8a8a8a;box-shadow:inset 1px 1px 0 #fff"></div>
<div class="a" style="left:34px;top:262.500px;width:88px;height:21.875px;background:#ffdfc0;border-right:1px solid #000;border-bottom:1px solid #000"></div>
<div class="a" style="left:122px;top:262.500px;width:78px;height:21.875px;background:#80ffff;border-right:1px solid #000;border-bottom:1px solid #000"></div>
<div class="a" style="left:200px;top:262.500px;width:75px;height:21.875px;background:#80ffff;border-right:1px solid #000;border-bottom:1px solid #000"></div>
<div class="a" style="left:275px;top:262.500px;width:145px;height:21.875px;background:#fff;border-right:1px solid #000;border-bottom:1px solid #000"></div>
<div class="a" style="left:420px;top:262.500px;width:254px;height:21.875px;background:#fff;border-bottom:1px solid #000;border-right:1px solid #000"></div>
<div class="a" style="left:658px;top:263.500px;width:15px;height:19.875px;background:#f0f0f0"></div>
<svg class="a" style="left:662px;top:271.000px" width="8" height="5"><path d="M0 0H7.5L3.75 5Z" fill="#000"/></svg>
<div class="a" style="left:0;top:284.375px;width:34px;height:21.875px;background:#d4d0c8;border-left:1px solid #8a8a8a;border-right:1px solid #8a8a8a;border-bottom:1px solid #8a8a8a;box-shadow:inset 1px 1px 0 #fff"></div>
<div class="a" style="left:34px;top:284.375px;width:88px;height:21.875px;background:#ffdfc0;border-right:1px solid #000;border-bottom:1px solid #000"></div>
<div class="a" style="left:122px;top:284.375px;width:78px;height:21.875px;background:#80ffff;border-right:1px solid #000;border-bottom:1px solid #000"></div>
<div class="a" style="left:200px;top:284.375px;width:75px;height:21.875px;background:#80ffff;border-right:1px solid #000;border-bottom:1px solid #000"></div>
<div class="a" style="left:275px;top:284.375px;width:145px;height:21.875px;background:#fff;border-right:1px solid #000;border-bottom:1px solid #000"></div>
<div class="a" style="left:420px;top:284.375px;width:254px;height:21.875px;background:#fff;border-bottom:1px solid #000;"></div>
<div class="a" style="left:0;top:306.250px;width:34px;height:21.875px;background:#d4d0c8;border-left:1px solid #8a8a8a;border-right:1px solid #8a8a8a;border-bottom:1px solid #8a8a8a;box-shadow:inset 1px 1px 0 #fff"></div>
<div class="a" style="left:34px;top:306.250px;width:88px;height:21.875px;background:#ffdfc0;border-right:1px solid #000;border-bottom:1px solid #000"></div>
<div class="a" style="left:122px;top:306.250px;width:78px;height:21.875px;background:#80ffff;border-right:1px solid #000;border-bottom:1px solid #000"></div>
<div class="a" style="left:200px;top:306.250px;width:75px;height:21.875px;background:#80ffff;border-right:1px solid #000;border-bottom:1px solid #000"></div>
<div class="a" style="left:275px;top:306.250px;width:145px;height:21.875px;background:#fff;border-right:1px solid #000;border-bottom:1px solid #000"></div>
<div class="a" style="left:420px;top:306.250px;width:254px;height:21.875px;background:#fff;border-bottom:1px solid #000;border-right:1px solid #000"></div>
<div class="a" style="left:658px;top:307.250px;width:15px;height:19.875px;background:#f0f0f0"></div>
<svg class="a" style="left:662px;top:314.750px" width="8" height="5"><path d="M0 0H7.5L3.75 5Z" fill="#000"/></svg>
<div class="a" style="left:0;top:328.125px;width:34px;height:21.875px;background:#d4d0c8;border-left:1px solid #8a8a8a;border-right:1px solid #8a8a8a;border-bottom:1px solid #8a8a8a;box-shadow:inset 1px 1px 0 #fff"></div>
<div class="a" style="left:34px;top:328.125px;width:88px;height:21.875px;background:#ffdfc0;border-right:1px solid #000;border-bottom:1px solid #000"></div>
<div class="a" style="left:122px;top:328.125px;width:78px;height:21.875px;background:#80ffff;border-right:1px solid #000;border-bottom:1px solid #000"></div>
<div class="a" style="left:200px;top:328.125px;width:75px;height:21.875px;background:#80ffff;border-right:1px solid #000;border-bottom:1px solid #000"></div>
<div class="a" style="left:275px;top:328.125px;width:145px;height:21.875px;background:#fff;border-right:1px solid #000;border-bottom:1px solid #000"></div>
<div class="a" style="left:420px;top:328.125px;width:254px;height:21.875px;background:#fff;border-bottom:1px solid #000;"></div>
<div class="a" style="left:0;top:350.000px;width:34px;height:21.875px;background:#d4d0c8;border-left:1px solid #8a8a8a;border-right:1px solid #8a8a8a;border-bottom:1px solid #8a8a8a;box-shadow:inset 1px 1px 0 #fff"></div>
<div class="a" style="left:34px;top:350.000px;width:88px;height:21.875px;background:#ffdfc0;border-right:1px solid #000;border-bottom:1px solid #000"></div>
<div class="a" style="left:122px;top:350.000px;width:78px;height:21.875px;background:#ffdfc0;border-right:1px solid #000;border-bottom:1px solid #000"></div>
<div class="a" style="left:200px;top:350.000px;width:75px;height:21.875px;background:#ffdfc0;border-right:1px solid #000;border-bottom:1px solid #000"></div>
<div class="a" style="left:275px;top:350.000px;width:145px;height:21.875px;background:#fff;border-right:1px solid #000;border-bottom:1px solid #000"></div>
<div class="a" style="left:420px;top:350.000px;width:254px;height:21.875px;background:#fff;border-bottom:1px solid #000;border-right:1px solid #000"></div>
<div class="a" style="left:658px;top:351.000px;width:15px;height:19.875px;background:#f0f0f0"></div>
<svg class="a" style="left:662px;top:358.500px" width="8" height="5"><path d="M0 0H7.5L3.75 5Z" fill="#000"/></svg>
<div class="a" style="left:0;top:371.875px;width:34px;height:21.875px;background:#d4d0c8;border-left:1px solid #8a8a8a;border-right:1px solid #8a8a8a;border-bottom:1px solid #8a8a8a;box-shadow:inset 1px 1px 0 #fff"></div>
<div class="a" style="left:34px;top:371.875px;width:88px;height:21.875px;background:#ffdfc0;border-right:1px solid #000;border-bottom:1px solid #000"></div>
<div class="a" style="left:122px;top:371.875px;width:78px;height:21.875px;background:#c0ffff;border-right:1px solid #000;border-bottom:1px solid #000"></div>
<div class="a" style="left:200px;top:371.875px;width:75px;height:21.875px;background:#c0ffff;border-right:1px solid #000;border-bottom:1px solid #000"></div>
<div class="a" style="left:275px;top:371.875px;width:145px;height:21.875px;background:#fff;border-right:1px solid #000;border-bottom:1px solid #000"></div>
<div class="a" style="left:420px;top:371.875px;width:254px;height:21.875px;background:#fff;border-bottom:1px solid #000;border-right:1px solid #000"></div>
<div class="a" style="left:658px;top:372.875px;width:15px;height:19.875px;background:#f0f0f0"></div>
<svg class="a" style="left:662px;top:380.375px" width="8" height="5"><path d="M0 0H7.5L3.75 5Z" fill="#000"/></svg>
<div class="a" style="left:0;top:393.750px;width:34px;height:21.875px;background:#d4d0c8;border-left:1px solid #8a8a8a;border-right:1px solid #8a8a8a;border-bottom:1px solid #8a8a8a;box-shadow:inset 1px 1px 0 #fff"></div>
<div class="a" style="left:34px;top:393.750px;width:88px;height:21.875px;background:#ffdfc0;border-right:1px solid #000;border-bottom:1px solid #000"></div>
<div class="a" style="left:122px;top:393.750px;width:78px;height:21.875px;background:#c0ffff;border-right:1px solid #000;border-bottom:1px solid #000"></div>
<div class="a" style="left:200px;top:393.750px;width:75px;height:21.875px;background:#c0ffff;border-right:1px solid #000;border-bottom:1px solid #000"></div>
<div class="a" style="left:275px;top:393.750px;width:145px;height:21.875px;background:#fff;border-right:1px solid #000;border-bottom:1px solid #000"></div>
<div class="a" style="left:420px;top:393.750px;width:254px;height:21.875px;background:#fff;border-bottom:1px solid #000;border-right:1px solid #000"></div>
<div class="a" style="left:658px;top:394.750px;width:15px;height:19.875px;background:#f0f0f0"></div>
<svg class="a" style="left:662px;top:402.250px" width="8" height="5"><path d="M0 0H7.5L3.75 5Z" fill="#000"/></svg>
<div class="a" style="left:0;top:415.625px;width:34px;height:21.875px;background:#d4d0c8;border-left:1px solid #8a8a8a;border-right:1px solid #8a8a8a;border-bottom:1px solid #8a8a8a;box-shadow:inset 1px 1px 0 #fff"></div>
<div class="a" style="left:34px;top:415.625px;width:88px;height:21.875px;background:#ffdfc0;border-right:1px solid #000;border-bottom:1px solid #000"></div>
<div class="a" style="left:122px;top:415.625px;width:78px;height:21.875px;background:#c0ffff;border-right:1px solid #000;border-bottom:1px solid #000"></div>
<div class="a" style="left:200px;top:415.625px;width:75px;height:21.875px;background:#c0ffff;border-right:1px solid #000;border-bottom:1px solid #000"></div>
<div class="a" style="left:275px;top:415.625px;width:145px;height:21.875px;background:#fff;border-right:1px solid #000;border-bottom:1px solid #000"></div>
<div class="a" style="left:420px;top:415.625px;width:254px;height:21.875px;background:#fff;border-bottom:1px solid #000;border-right:1px solid #000"></div>
<div class="a" style="left:658px;top:416.625px;width:15px;height:19.875px;background:#f0f0f0"></div>
<svg class="a" style="left:662px;top:424.125px" width="8" height="5"><path d="M0 0H7.5L3.75 5Z" fill="#000"/></svg>
<div class="a" style="left:0;top:437.500px;width:34px;height:21.875px;background:#d4d0c8;border-left:1px solid #8a8a8a;border-right:1px solid #8a8a8a;border-bottom:1px solid #8a8a8a;box-shadow:inset 1px 1px 0 #fff"></div>
<div class="a" style="left:34px;top:437.500px;width:88px;height:21.875px;background:#ffdfc0;border-right:1px solid #000;border-bottom:1px solid #000"></div>
<div class="a" style="left:122px;top:437.500px;width:78px;height:21.875px;background:#ffdfc0;border-right:1px solid #000;border-bottom:1px solid #000"></div>
<div class="a" style="left:200px;top:437.500px;width:75px;height:21.875px;background:#ffdfc0;border-right:1px solid #000;border-bottom:1px solid #000"></div>
<div class="a" style="left:275px;top:437.500px;width:145px;height:21.875px;background:#fff;border-right:1px solid #000;border-bottom:1px solid #000"></div>
<div class="a" style="left:420px;top:437.500px;width:254px;height:21.875px;background:#fff;border-bottom:1px solid #000;border-right:1px solid #000"></div>
<div class="a" style="left:658px;top:438.500px;width:15px;height:19.875px;background:#f0f0f0"></div>
<svg class="a" style="left:662px;top:446.000px" width="8" height="5"><path d="M0 0H7.5L3.75 5Z" fill="#000"/></svg>
<div class="a" style="left:0;top:459.375px;width:34px;height:21.875px;background:#d4d0c8;border-left:1px solid #8a8a8a;border-right:1px solid #8a8a8a;border-bottom:1px solid #8a8a8a;box-shadow:inset 1px 1px 0 #fff"></div>
<div class="a" style="left:34px;top:459.375px;width:88px;height:21.875px;background:#ffdfc0;border-right:1px solid #000;border-bottom:1px solid #000"></div>
<div class="a" style="left:122px;top:459.375px;width:78px;height:21.875px;background:#ffdfc0;border-right:1px solid #000;border-bottom:1px solid #000"></div>
<div class="a" style="left:200px;top:459.375px;width:75px;height:21.875px;background:#ffdfc0;border-right:1px solid #000;border-bottom:1px solid #000"></div>
<div class="a" style="left:275px;top:459.375px;width:145px;height:21.875px;background:#fff;border-right:1px solid #000;border-bottom:1px solid #000"></div>
<div class="a" style="left:420px;top:459.375px;width:254px;height:21.875px;background:#fff;border-bottom:1px solid #000;border-right:1px solid #000"></div>
<div class="a" style="left:658px;top:460.375px;width:15px;height:19.875px;background:#f0f0f0"></div>
<svg class="a" style="left:662px;top:467.875px" width="8" height="5"><path d="M0 0H7.5L3.75 5Z" fill="#000"/></svg>
<div class="a" style="left:0;top:481.250px;width:34px;height:21.875px;background:#d4d0c8;border-left:1px solid #8a8a8a;border-right:1px solid #8a8a8a;border-bottom:1px solid #8a8a8a;box-shadow:inset 1px 1px 0 #fff"></div>
<div class="a" style="left:34px;top:481.250px;width:88px;height:21.875px;background:#ffdfc0;border-right:1px solid #000;border-bottom:1px solid #000"></div>
<div class="a" style="left:122px;top:481.250px;width:78px;height:21.875px;background:#ffdfc0;border-right:1px solid #000;border-bottom:1px solid #000"></div>
<div class="a" style="left:200px;top:481.250px;width:75px;height:21.875px;background:#ffdfc0;border-right:1px solid #000;border-bottom:1px solid #000"></div>
<div class="a" style="left:275px;top:481.250px;width:145px;height:21.875px;background:#fff;border-right:1px solid #000;border-bottom:1px solid #000"></div>
<div class="a" style="left:420px;top:481.250px;width:254px;height:21.875px;background:#fff;border-bottom:1px solid #000;border-right:1px solid #000"></div>
<div class="a" style="left:658px;top:482.250px;width:15px;height:19.875px;background:#f0f0f0"></div>
<svg class="a" style="left:662px;top:489.750px" width="8" height="5"><path d="M0 0H7.5L3.75 5Z" fill="#000"/></svg>
<div class="a" style="left:0;top:503.125px;width:34px;height:21.875px;background:#d4d0c8;border-left:1px solid #8a8a8a;border-right:1px solid #8a8a8a;border-bottom:1px solid #8a8a8a;box-shadow:inset 1px 1px 0 #fff"></div>
<div class="a" style="left:34px;top:503.125px;width:88px;height:21.875px;background:#ffdfc0;border-right:1px solid #000;border-bottom:1px solid #000"></div>
<div class="a" style="left:122px;top:503.125px;width:78px;height:21.875px;background:#ffdfc0;border-right:1px solid #000;border-bottom:1px solid #000"></div>
<div class="a" style="left:200px;top:503.125px;width:75px;height:21.875px;background:#ffdfc0;border-right:1px solid #000;border-bottom:1px solid #000"></div>
<div class="a" style="left:275px;top:503.125px;width:145px;height:21.875px;background:#fff;border-right:1px solid #000;border-bottom:1px solid #000"></div>
<div class="a" style="left:420px;top:503.125px;width:254px;height:21.875px;background:#fff;border-bottom:1px solid #000;border-right:1px solid #000"></div>
<div class="a" style="left:658px;top:504.125px;width:15px;height:19.875px;background:#f0f0f0"></div>
<svg class="a" style="left:662px;top:511.625px" width="8" height="5"><path d="M0 0H7.5L3.75 5Z" fill="#000"/></svg>
<div class="a" style="left:0;top:525.000px;width:34px;height:21.875px;background:#d4d0c8;border-left:1px solid #8a8a8a;border-right:1px solid #8a8a8a;border-bottom:1px solid #8a8a8a;box-shadow:inset 1px 1px 0 #fff"></div>
<div class="a" style="left:34px;top:525.000px;width:88px;height:21.875px;background:#ffdfc0;border-right:1px solid #000;border-bottom:1px solid #000"></div>
<div class="a" style="left:122px;top:525.000px;width:78px;height:21.875px;background:#ffdfc0;border-right:1px solid #000;border-bottom:1px solid #000"></div>
<div class="a" style="left:200px;top:525.000px;width:75px;height:21.875px;background:#ffdfc0;border-right:1px solid #000;border-bottom:1px solid #000"></div>
<div class="a" style="left:275px;top:525.000px;width:145px;height:21.875px;background:#fff;border-right:1px solid #000;border-bottom:1px solid #000"></div>
<div class="a" style="left:420px;top:525.000px;width:254px;height:21.875px;background:#fff;border-bottom:1px solid #000;border-right:1px solid #000"></div>
<div class="a" style="left:658px;top:526.000px;width:15px;height:19.875px;background:#f0f0f0"></div>
<svg class="a" style="left:662px;top:533.500px" width="8" height="5"><path d="M0 0H7.5L3.75 5Z" fill="#000"/></svg>
<div class="a" style="left:0;top:546.875px;width:34px;height:21.875px;background:#d4d0c8;border-left:1px solid #8a8a8a;border-right:1px solid #8a8a8a;border-bottom:1px solid #8a8a8a;box-shadow:inset 1px 1px 0 #fff"></div>
<div class="a" style="left:34px;top:546.875px;width:88px;height:21.875px;background:#ffdfc0;border-right:1px solid #000;border-bottom:1px solid #000"></div>
<div class="a" style="left:122px;top:546.875px;width:78px;height:21.875px;background:#ffdfc0;border-right:1px solid #000;border-bottom:1px solid #000"></div>
<div class="a" style="left:200px;top:546.875px;width:75px;height:21.875px;background:#ffdfc0;border-right:1px solid #000;border-bottom:1px solid #000"></div>
<div class="a" style="left:275px;top:546.875px;width:145px;height:21.875px;background:#fff;border-right:1px solid #000;border-bottom:1px solid #000"></div>
<div class="a" style="left:420px;top:546.875px;width:254px;height:21.875px;background:#fff;border-bottom:1px solid #000;"></div>
<div class="a" style="left:0;top:568.750px;width:34px;height:21.875px;background:#d4d0c8;border-left:1px solid #8a8a8a;border-right:1px solid #8a8a8a;border-bottom:1px solid #8a8a8a;box-shadow:inset 1px 1px 0 #fff"></div>
<div class="a" style="left:34px;top:568.750px;width:88px;height:21.875px;background:#ffffc0;border-right:1px solid #000;border-bottom:1px solid #000"></div>
<div class="a" style="left:122px;top:568.750px;width:78px;height:21.875px;background:#ffffc0;border-right:1px solid #000;border-bottom:1px solid #000"></div>
<div class="a" style="left:200px;top:568.750px;width:75px;height:21.875px;background:#ffffc0;border-right:1px solid #000;border-bottom:1px solid #000"></div>
<div class="a" style="left:275px;top:568.750px;width:145px;height:21.875px;background:#fff;border-right:1px solid #000;border-bottom:1px solid #000"></div>
<div class="a" style="left:420px;top:568.750px;width:254px;height:21.875px;background:#fff;border-bottom:1px solid #000;"></div>
<div class="a" style="left:0;top:590.625px;width:34px;height:21.875px;background:#d4d0c8;border-left:1px solid #8a8a8a;border-right:1px solid #8a8a8a;border-bottom:1px solid #8a8a8a;box-shadow:inset 1px 1px 0 #fff"></div>
<div class="a" style="left:34px;top:590.625px;width:88px;height:21.875px;background:#ffffc0;border-right:1px solid #000;border-bottom:1px solid #000"></div>
<div class="a" style="left:122px;top:590.625px;width:78px;height:21.875px;background:#ffffc0;border-right:1px solid #000;border-bottom:1px solid #000"></div>
<div class="a" style="left:200px;top:590.625px;width:75px;height:21.875px;background:#ffffc0;border-right:1px solid #000;border-bottom:1px solid #000"></div>
<div class="a" style="left:275px;top:590.625px;width:145px;height:21.875px;background:#fff;border-right:1px solid #000;border-bottom:1px solid #000"></div>
<div class="a" style="left:420px;top:590.625px;width:254px;height:21.875px;background:#fff;border-bottom:1px solid #000;"></div>
</div>
<div class="t" style="left:298.41px;top:244.50px;font-size:14.7px;transform:scaleX(0.9857);">扉体</div>
<div class="t" style="left:539.60px;top:244.50px;font-size:14.7px;">数高又は設置標高</div>
<div class="t" style="left:682.47px;top:245.00px;font-size:14.7px;transform:scaleX(1.0286);">2</div>
<div class="t" style="left:274.56px;top:268.07px;font-size:14.4px;transform:scaleX(0.9857);">2</div>
<div class="t" style="left:539.60px;top:266.38px;font-size:14.7px;transform:scaleX(0.9950);">設計水位</div>
<div class="t" style="left:682.50px;top:266.88px;font-size:14.7px;">10</div>
<div class="t" style="left:274.56px;top:289.95px;font-size:14.4px;transform:scaleX(0.9857);">3</div>
<div class="t" style="left:387.40px;top:288.25px;font-size:14.7px;transform:scaleX(0.9767);">操作水位</div>
<div class="t" style="left:538.51px;top:288.25px;font-size:14.7px;transform:scaleX(1.0923);">開</div>
<div class="t" style="left:682.50px;top:288.75px;font-size:14.7px;">10</div>
<div class="t" style="left:275.55px;top:311.82px;font-size:14.4px;transform:scaleX(0.8625);">4</div>
<div class="t" style="left:538.51px;top:310.12px;font-size:14.7px;transform:scaleX(1.0923);">閉</div>
<div class="t" style="left:682.47px;top:310.62px;font-size:14.7px;transform:scaleX(1.0286);">6</div>
<div class="t" style="left:274.56px;top:333.70px;font-size:14.4px;transform:scaleX(0.9857);">5</div>
<div class="t" style="left:387.40px;top:332.00px;font-size:14.7px;transform:scaleX(0.9552);">材質</div>
<div class="t" style="left:537.84px;top:332.00px;font-size:14.7px;transform:scaleX(0.8788);">スキンプレート</div>
<div class="t" style="left:682.53px;top:333.60px;font-size:14.7px;transform:scaleX(0.9674);">SS400</div>
<div class="t" style="left:274.56px;top:355.57px;font-size:14.4px;transform:scaleX(0.9857);">6</div>
<div class="t" style="left:539.60px;top:353.88px;font-size:14.7px;transform:scaleX(1.0414);">主桁</div>
<div class="t" style="left:682.53px;top:355.48px;font-size:14.7px;transform:scaleX(0.9674);">SS400</div>
<div class="t" style="left:274.56px;top:377.45px;font-size:14.4px;transform:scaleX(0.9857);">7</div>
<div class="t" style="left:538.52px;top:375.75px;font-size:14.7px;transform:scaleX(1.0786);">脚柱</div>
<div class="t" style="left:682.53px;top:377.35px;font-size:14.7px;transform:scaleX(0.9674);">SS400</div>
<div class="t" style="left:274.56px;top:399.32px;font-size:14.4px;transform:scaleX(0.9857);">8</div>
<div class="t" style="left:539.60px;top:397.62px;font-size:14.7px;transform:scaleX(0.9351);">主ローラ</div>
<div class="t" style="left:682.53px;top:399.23px;font-size:14.7px;transform:scaleX(0.9705);">SC450</div>
<div class="t" style="left:274.56px;top:421.20px;font-size:14.4px;transform:scaleX(0.9857);">9</div>
<div class="t" style="left:539.60px;top:419.50px;font-size:14.7px;transform:scaleX(0.9339);">定着ゴム</div>
<div class="t" style="left:683.50px;top:421.10px;font-size:14.7px;transform:scaleX(0.9339);">合成ゴム</div>
<div class="t" style="left:270.61px;top:443.07px;font-size:14.4px;transform:scaleX(0.9867);">10</div>
<div class="t" style="left:538.57px;top:441.38px;font-size:14.7px;transform:scaleX(1.0326);">引留帯</div>
<div class="t" style="left:683.50px;top:442.98px;font-size:14.7px;transform:scaleX(0.9339);">合成ゴム</div>
<div class="t" style="left:270.54px;top:464.95px;font-size:14.4px;transform:scaleX(1.0571);">11</div>
<div class="t" style="left:386.40px;top:463.25px;font-size:14.7px;">余裕厚</div>
<div class="t" style="left:538.66px;top:463.25px;font-size:14.7px;transform:scaleX(0.9423);">余裕厚1</div>
<div class="t" style="left:680.75px;top:463.75px;font-size:14.7px;">1</div>
<div class="t" style="left:270.61px;top:486.82px;font-size:14.4px;transform:scaleX(0.9867);">12</div>
<div class="t" style="left:538.61px;top:485.12px;font-size:14.7px;transform:scaleX(0.9885);">余裕厚2</div>
<div class="t" style="left:680.75px;top:485.62px;font-size:14.7px;">1</div>
<div class="t" style="left:270.61px;top:508.70px;font-size:14.4px;transform:scaleX(0.9867);">13</div>
<div class="t" style="left:386.41px;top:507.00px;font-size:14.7px;transform:scaleX(0.9893);">塗装</div>
<div class="t" style="left:539.60px;top:507.00px;font-size:14.7px;transform:scaleX(0.9158);">仕様1</div>
<div class="t" style="left:682.56px;top:508.60px;font-size:14.7px;transform:scaleX(0.9394);">エポキシ樹脂系</div>
<div class="t" style="left:270.61px;top:530.58px;font-size:14.4px;transform:scaleX(0.9867);">14</div>
<div class="t" style="left:538.66px;top:528.88px;font-size:14.7px;transform:scaleX(0.9405);">面積1</div>
<div class="t" style="left:682.50px;top:529.38px;font-size:14.7px;">12</div>
<div class="t" style="left:270.61px;top:552.45px;font-size:14.4px;transform:scaleX(0.9867);">15</div>
<div class="t" style="left:539.60px;top:550.75px;font-size:14.7px;transform:scaleX(0.9342);">仕様2</div>
<div class="t" style="left:681.63px;top:552.35px;font-size:14.7px;transform:scaleX(0.9365);">タールエポキシ樹脂系</div>
<div class="t" style="left:270.61px;top:574.33px;font-size:14.4px;transform:scaleX(0.9867);">16</div>
<div class="t" style="left:538.64px;top:572.62px;font-size:14.7px;transform:scaleX(0.9595);">面積2</div>
<div class="t" style="left:682.47px;top:573.12px;font-size:14.7px;transform:scaleX(1.0286);">8</div>
<div class="t" style="left:270.61px;top:596.20px;font-size:14.4px;transform:scaleX(0.9867);">17</div>
<div class="t" style="left:538.61px;top:594.50px;font-size:14.7px;transform:scaleX(0.9932);">水密方式</div>
<div class="t" style="left:682.52px;top:596.10px;font-size:14.7px;transform:scaleX(0.9839);">両面4方ゴム水密</div>
<div class="t" style="left:270.61px;top:618.08px;font-size:14.4px;transform:scaleX(0.9867);">18</div>
<div class="t" style="left:386.46px;top:616.38px;font-size:14.7px;transform:scaleX(0.9414);">水密ゴム</div>
<div class="t" style="left:539.60px;top:616.38px;font-size:14.7px;">上部</div>
<div class="t" style="left:682.57px;top:617.98px;font-size:14.7px;transform:scaleX(0.9257);">P形･ 合成ゴム･40° ～80°</div>
<div class="t" style="left:270.61px;top:639.95px;font-size:14.4px;transform:scaleX(0.9867);">19</div>
<div class="t" style="left:539.60px;top:638.25px;font-size:14.7px;">下部</div>
<div class="t" style="left:683.50px;top:639.85px;font-size:14.7px;transform:scaleX(0.9283);">平形･ 合成ゴム･40° ～80°</div>
<div class="t" style="left:270.61px;top:661.83px;font-size:14.4px;transform:scaleX(0.9867);">20</div>
<div class="t" style="left:539.60px;top:660.12px;font-size:14.7px;">側部</div>
<div class="t" style="left:682.57px;top:661.73px;font-size:14.7px;transform:scaleX(0.9257);">P形･ 合成ゴム･40° ～80°</div>
<div class="t" style="left:270.61px;top:683.70px;font-size:14.4px;transform:scaleX(0.9867);">21</div>
<div class="t" style="left:539.60px;top:682.00px;font-size:14.7px;transform:scaleX(0.9767);">軸受形式</div>
<div class="t" style="left:682.55px;top:683.60px;font-size:14.7px;transform:scaleX(0.9493);">すべり軸受</div>
<div class="t" style="left:270.61px;top:705.58px;font-size:14.4px;transform:scaleX(0.9867);">22</div>
<div class="t" style="left:538.61px;top:703.88px;font-size:14.7px;transform:scaleX(0.9932);">固定方式</div>
<div class="t" style="left:682.47px;top:705.48px;font-size:14.7px;transform:scaleX(1.0314);">2列固定</div>
<div class="t" style="left:270.61px;top:727.45px;font-size:14.4px;transform:scaleX(0.9867);">23</div>
<div class="t" style="left:539.60px;top:725.75px;font-size:14.7px;transform:scaleX(0.9767);">倒伏方式</div>
<div class="t" style="left:682.49px;top:727.35px;font-size:14.7px;transform:scaleX(1.0119);">両倒れ式</div>
<div class="t" style="left:270.61px;top:749.33px;font-size:14.4px;transform:scaleX(0.9867);">24</div>
<div class="t" style="left:539.60px;top:747.62px;font-size:14.7px;transform:scaleX(0.9932);">給油装置</div>
<div class="t" style="left:682.49px;top:749.23px;font-size:14.7px;transform:scaleX(1.0067);">集中給油方式</div>
<div class="t" style="left:270.61px;top:771.20px;font-size:14.4px;transform:scaleX(0.9867);">25</div>
<div class="t" style="left:537.86px;top:769.50px;font-size:14.7px;transform:scaleX(0.8682);">ダストシール</div>
<div class="t" style="left:683.50px;top:771.10px;font-size:14.7px;transform:scaleX(0.8927);">Vシール</div>
<div class="t" style="left:270.61px;top:793.08px;font-size:14.4px;transform:scaleX(0.9867);">26</div>
<div class="t" style="left:538.65px;top:791.38px;font-size:14.7px;transform:scaleX(0.9523);">その他</div>
<div class="t" style="left:682.53px;top:791.88px;font-size:14.7px;transform:scaleX(0.9705);">その他</div>
<div class="t" style="left:270.61px;top:814.95px;font-size:14.4px;transform:scaleX(0.9867);">27</div>
<div class="t" style="left:299.40px;top:813.25px;font-size:14.7px;transform:scaleX(0.9729);">設計概要</div>
<div class="t" style="left:539.60px;top:813.25px;font-size:14.7px;transform:scaleX(0.9932);">地震係数</div>
<div class="t" style="left:682.53px;top:813.75px;font-size:14.7px;transform:scaleX(0.9737);">1.0</div>
<div class="t" style="left:270.61px;top:836.83px;font-size:14.4px;transform:scaleX(0.9867);">28</div>
<div class="t" style="left:539.60px;top:835.12px;font-size:14.7px;transform:scaleX(0.9838);">地震波浪高</div>
<div class="t" style="left:682.53px;top:835.62px;font-size:14.7px;transform:scaleX(0.9737);">3m</div>
<div class="a" style="left:296px;top:246px;width:88px;height:21px;border:1px solid #0a246a"></div>
<div class="a" style="left:262px;top:854px;width:678px;height:11px;background:#f0f0f0;border-left:1px solid #8a8a8a;border-top:1px solid #f8f8f8"></div>
<div class="a" style="left:246px;top:871px;width:694px;height:2px;background:#8c8c8c"></div>
<div class="a" style="left:263px;top:854px;width:14px;height:11px;background:#f6f6f6;border-right:1px solid #dcdcdc"></div>
<svg class="a" style="left:266px;top:857px" width="5" height="8"><path d="M5 0V8L0 4Z" fill="#000"/></svg>
<div class="a" style="left:119px;top:203px;width:184px;height:176px;background:rgba(0,0,0,0.38);filter:blur(1.2px)"></div>
<div class="a" style="left:114px;top:198px;width:187px;height:179px;background:#f0f0f0;border:1px solid #c8c8c8;box-shadow:inset 1px 1px 0 #fafafa,inset -1px -1px 0 #fafafa"></div>
<div class="a" style="left:117px;top:251px;width:181px;height:21px;background:#91c9f7"></div>
<div class="t" style="left:149.20px;top:201.50px;font-size:12.5px;transform:scaleX(0.9255);">新規台帳</div>
<svg class="a" style="left:284px;top:207px" width="6" height="9"><path d="M1 1L5 4.5L1 8" stroke="#333" stroke-width="1.2" fill="none"/></svg>
<div class="t" style="left:148.27px;top:223.50px;font-size:12.5px;transform:scaleX(0.9340);">台帳削除</div>
<svg class="a" style="left:284px;top:229px" width="6" height="9"><path d="M1 1L5 4.5L1 8" stroke="#333" stroke-width="1.2" fill="none"/></svg>
<div class="a" style="left:145px;top:247px;width:153px;height:1px;background:#d7d7d7"></div>
<div class="t" style="left:148.36px;top:252.00px;font-size:12.5px;transform:scaleX(0.8351);">台帳データXML出力</div>
<div class="t" style="left:148.38px;top:274.50px;font-size:12.5px;transform:scaleX(0.8169);">台帳データ取込</div>
<div class="a" style="left:145px;top:298px;width:153px;height:1px;background:#d7d7d7"></div>
<div class="t" style="left:148.47px;top:303.20px;font-size:12.5px;transform:scaleX(0.7255);">台帳データコピー</div>
<div class="t" style="left:148.41px;top:324.80px;font-size:12.5px;transform:scaleX(0.7878);">台帳データ貼り付け</div>
<div class="a" style="left:145px;top:349px;width:153px;height:1px;background:#d7d7d7"></div>
<div class="t" style="left:149.20px;top:353.50px;font-size:12.5px;transform:scaleX(0.9260);">入力画面表示</div></body></html>
